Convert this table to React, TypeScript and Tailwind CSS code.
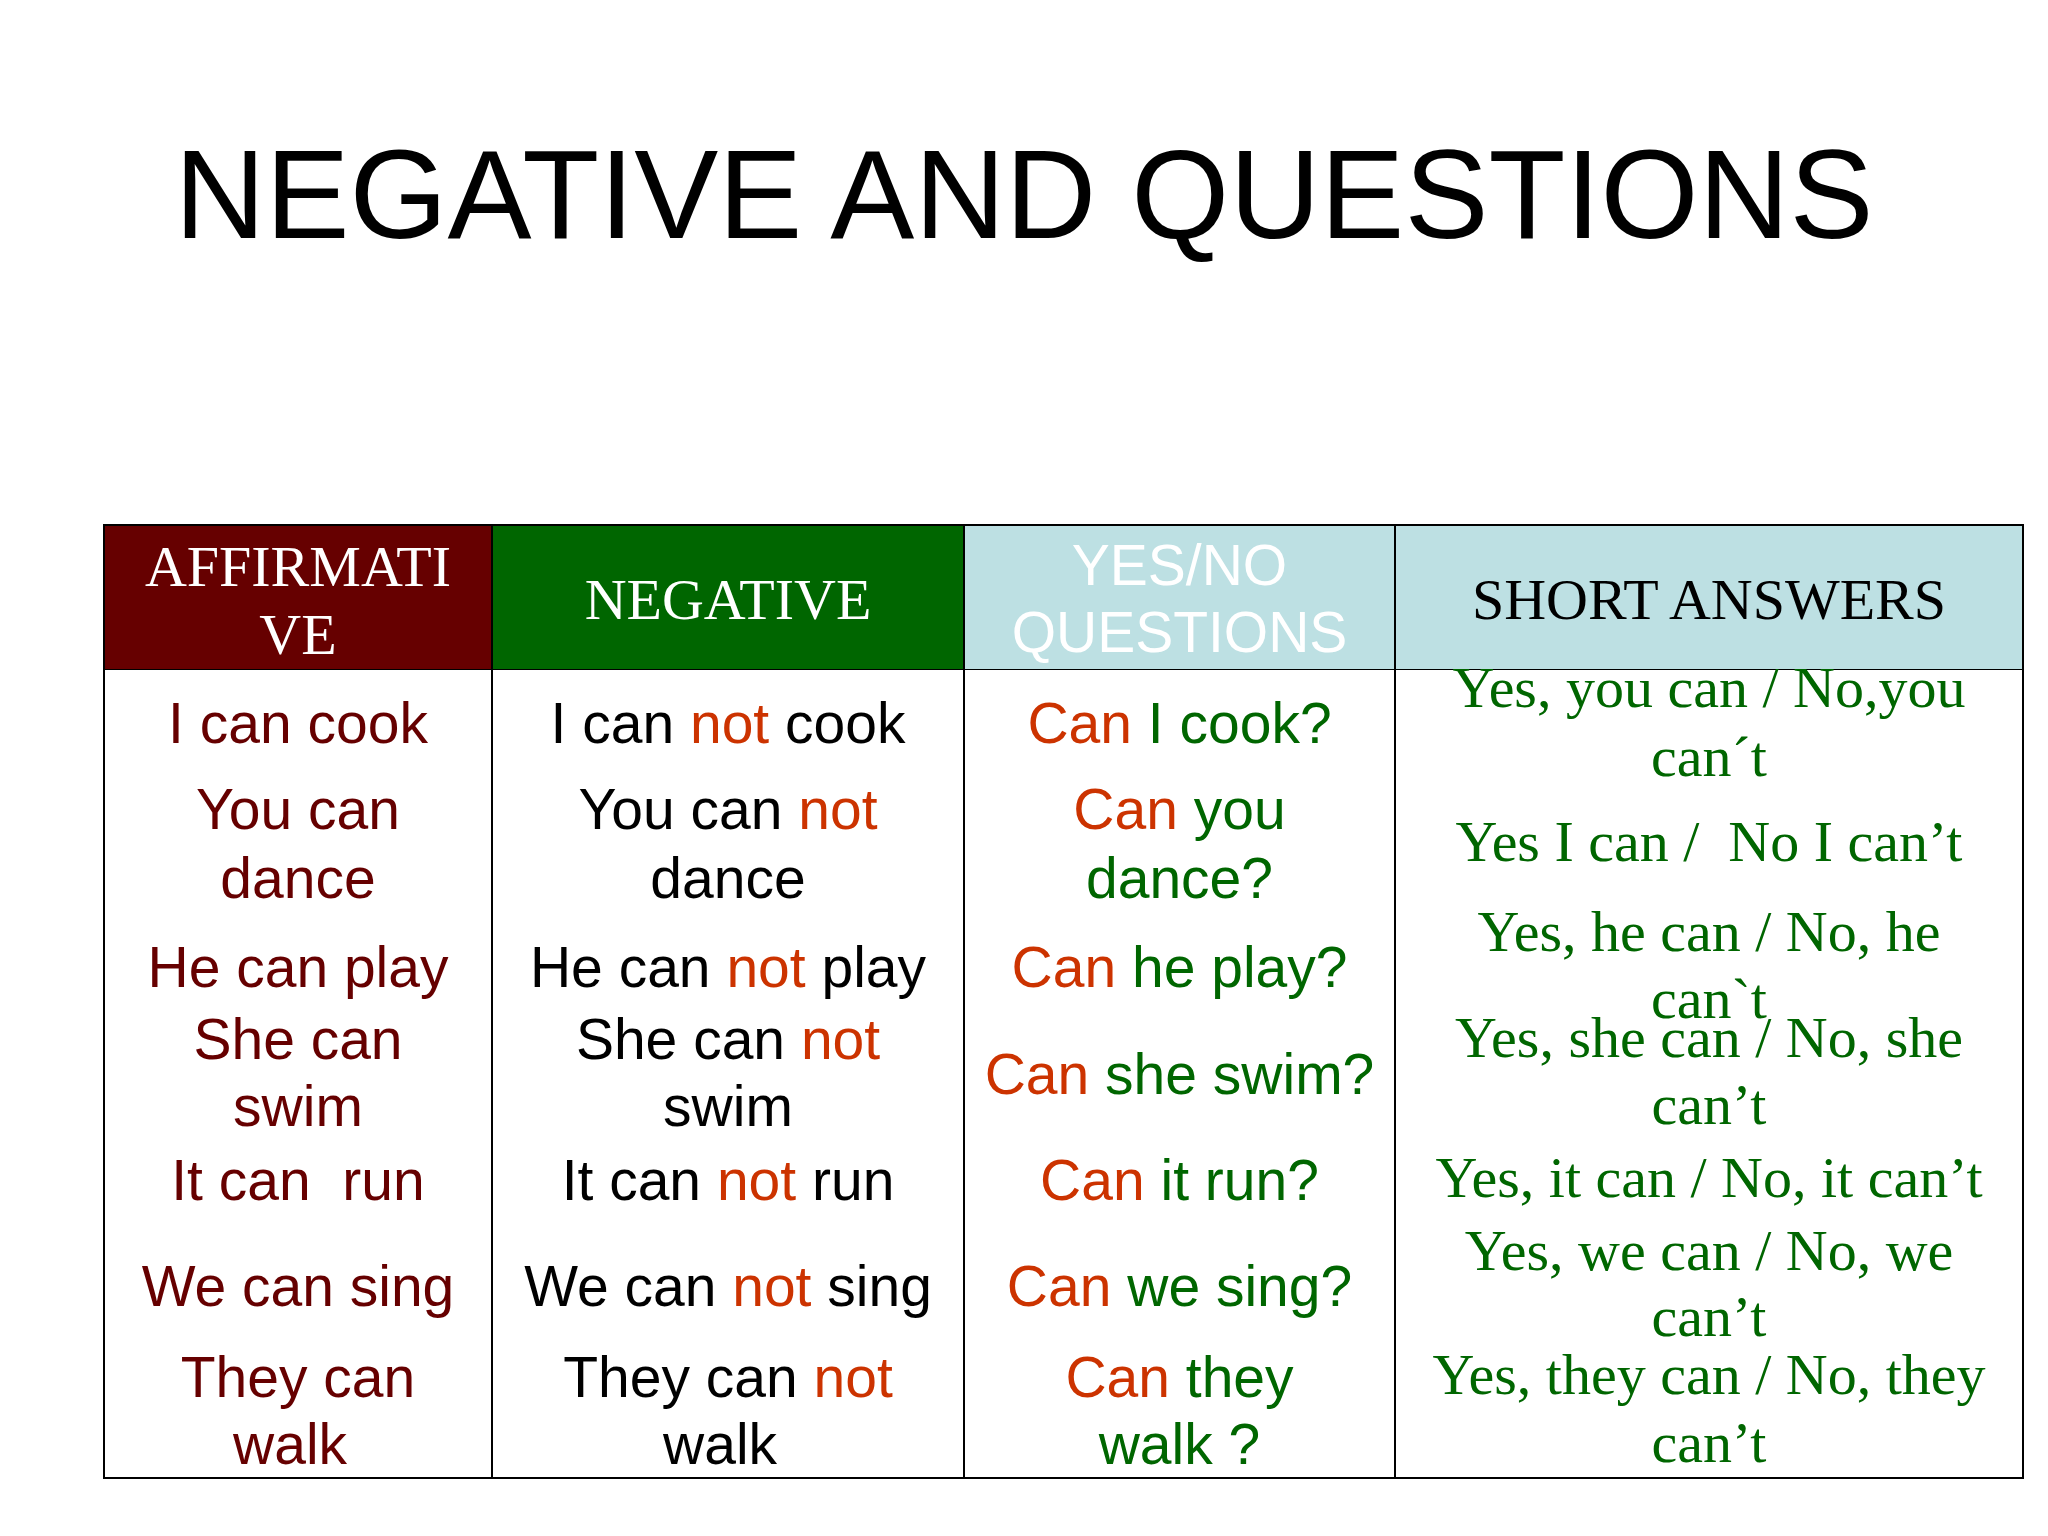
import React from "react";

type Seg = [string, string];
type Line = { mt: string; segs: Seg[] };

const RED = "text-[#660000]";
const BLK = "text-black";
const ORG = "text-[#cc3300]";
const GRN = "text-[#006600]";

const col1: Line[] = [
  { mt: "mt-[19px]", segs: [["I can cook", RED]] },
  { mt: "mt-[18px]", segs: [["You can", RED]] },
  { mt: "mt-[1px]", segs: [["dance", RED]] },
  { mt: "mt-[21px]", segs: [["He can play", RED]] },
  { mt: "mt-[4px]", segs: [["She can", RED]] },
  { mt: "-mt-[1px]", segs: [["swim", RED]] },
  { mt: "mt-[6px]", segs: [["It can  run", RED]] },
  { mt: "mt-[38px]", segs: [["We can sing", RED]] },
  { mt: "mt-[23px]", segs: [["They can", RED]] },
  { mt: "-mt-[1px]", segs: [["walk ", RED]] },
];

const col2: Line[] = [
  { mt: "mt-[19px]", segs: [["I can ", BLK], ["not", ORG], [" cook", BLK]] },
  { mt: "mt-[18px]", segs: [["You can ", BLK], ["not", ORG]] },
  { mt: "mt-[1px]", segs: [["dance", BLK]] },
  { mt: "mt-[21px]", segs: [["He can ", BLK], ["not", ORG], [" play", BLK]] },
  { mt: "mt-[4px]", segs: [["She can ", BLK], ["not", ORG]] },
  { mt: "-mt-[1px]", segs: [["swim", BLK]] },
  { mt: "mt-[6px]", segs: [["It can ", BLK], ["not", ORG], [" run", BLK]] },
  { mt: "mt-[38px]", segs: [["We can ", BLK], ["not", ORG], [" sing", BLK]] },
  { mt: "mt-[23px]", segs: [["They can ", BLK], ["not", ORG]] },
  { mt: "-mt-[1px]", segs: [["walk ", BLK]] },
];

const col3: Line[] = [
  { mt: "mt-[19px]", segs: [["Can", ORG], [" I cook?", GRN]] },
  { mt: "mt-[18px]", segs: [["Can", ORG], [" you", GRN]] },
  { mt: "mt-[1px]", segs: [["dance?", GRN]] },
  { mt: "mt-[21px]", segs: [["Can", ORG], [" he play?", GRN]] },
  { mt: "mt-[39px]", segs: [["Can", ORG], [" she swim?", GRN]] },
  { mt: "mt-[38px]", segs: [["Can", ORG], [" it run?", GRN]] },
  { mt: "mt-[38px]", segs: [["Can", ORG], [" we sing?", GRN]] },
  { mt: "mt-[23px]", segs: [["Can", ORG], [" they", GRN]] },
  { mt: "-mt-[1px]", segs: [["walk ?", GRN]] },
];

const col4: Line[] = [
  { mt: "-mt-[16px]", segs: [["Yes, you can / No,you", GRN]] },
  { mt: "mt-[1px]", segs: [["can\u00B4t", GRN]] },
  { mt: "mt-[17px]", segs: [["Yes I can /  No I can\u2019t", GRN]] },
  { mt: "mt-[22px]", segs: [["Yes, he can / No, he", GRN]] },
  { mt: "-mt-[1px]", segs: [["can`t", GRN]] },
  { mt: "-mt-[29px]", segs: [["Yes, she can / No, she", GRN]] },
  { mt: "-mt-[1px]", segs: [["can\u2019t", GRN]] },
  { mt: "mt-[5px]", segs: [["Yes, it can / No, it can\u2019t", GRN]] },
  { mt: "mt-[5px]", segs: [["Yes, we can / No, we", GRN]] },
  { mt: "-mt-[2px]", segs: [["can\u2019t", GRN]] },
  { mt: "-mt-[10px]", segs: [["Yes, they can / No, they", GRN]] },
  { mt: "mt-[0px]", segs: [["can\u2019t", GRN]] },
];

function Column({ lines, serif, border }: { lines: Line[]; serif?: boolean; border?: boolean }) {
  return (
    <div
      className={
        "flex flex-col text-center leading-[68px] whitespace-pre " +
        (serif ? "text-[58px] font-['Liberation_Serif',serif] " : "text-[57px] font-['Liberation_Sans',Arial,sans-serif] ") +
        (border ? "border-l-2 border-black" : "")
      }
    >
      {lines.map((l, i) => (
        <div key={i} className={l.mt}>
          {l.segs.map((s, j) => (
            <span key={j} className={s[1]}>
              {s[0]}
            </span>
          ))}
        </div>
      ))}
    </div>
  );
}

export default function App() {
  return (
    <div className="w-[2048px] h-[1536px] bg-white overflow-hidden">
      <div className="pt-[132px] text-center text-[126px] leading-[126px] text-black font-['Liberation_Sans',Arial,sans-serif]">
        NEGATIVE AND QUESTIONS
      </div>
      <div className="mt-[266px] ml-[103px] w-[1921px] border-2 border-black">
        <div className="grid grid-cols-[386px_472px_431px_628px] h-[144px] border-b-[3px] border-black">
          <div className="bg-[#660000] text-white text-center pt-[7px] text-[58px] leading-[68px] font-['Liberation_Serif',serif]">
            AFFIRMATI
            <br />
            VE
          </div>
          <div className="bg-[#006600] border-l-2 border-black text-white text-center pt-[40px] text-[58px] leading-[68px] font-['Liberation_Serif',serif]">
            NEGATIVE
          </div>
          <div className="bg-[#bde0e3] border-l-2 border-black text-white text-center pt-[6px] text-[57px] leading-[67px] font-['Liberation_Sans',Arial,sans-serif]">
            YES/NO
            <br />
            QUESTIONS
          </div>
          <div className="bg-[#bde0e3] border-l-2 border-black text-black text-center pt-[40px] text-[58px] leading-[68px] font-['Liberation_Serif',serif]">
            SHORT ANSWERS
          </div>
        </div>
        <div className="grid grid-cols-[386px_472px_431px_628px] h-[807px]">
          <Column lines={col1} />
          <Column lines={col2} border />
          <Column lines={col3} border />
          <Column lines={col4} serif border />
        </div>
      </div>
    </div>
  );
}
